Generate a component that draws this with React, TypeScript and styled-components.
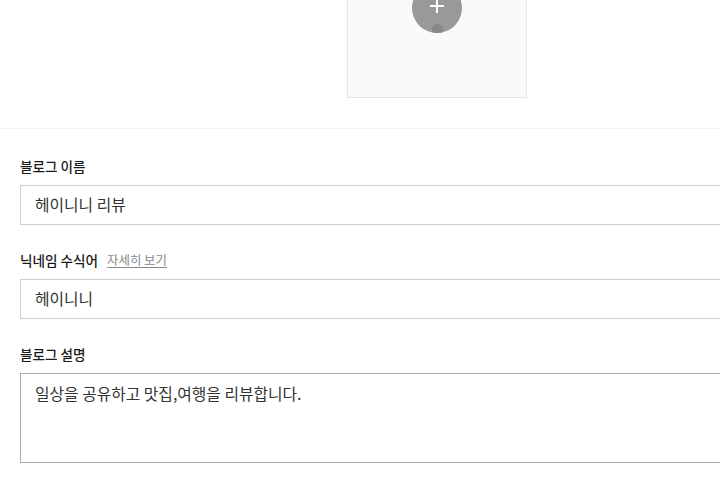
import React from "react";
import styled, { createGlobalStyle } from "styled-components";

const GlobalStyle = createGlobalStyle`
  html, body {
    margin: 0;
    padding: 0;
    background: #fff;
    overflow: hidden;
  }
  body {
    font-family: "Noto Sans CJK KR", "Noto Sans", sans-serif;
    color: #222;
  }
`;

const Page = styled.div`
  width: 874px;
  margin-top: -82px;
`;

const CoverSection = styled.section`
  display: flex;
  justify-content: center;
  padding-bottom: 30px;
  border-bottom: 1px solid #f0f0f0;
`;

const CoverBox = styled.div`
  width: 180px;
  height: 180px;
  box-sizing: border-box;
  background: #fafafa;
  border: 1px solid #e6e6e6;
  display: flex;
  align-items: center;
  justify-content: center;
`;

const AddButton = styled.button`
  position: relative;
  width: 50px;
  height: 50px;
  padding: 0;
  border: 0;
  border-radius: 50%;
  background: #999;
  display: flex;
  align-items: center;
  justify-content: center;
  overflow: hidden;
  cursor: pointer;
`;

const PlusIcon = styled.svg`
  width: 16px;
  height: 16px;
  margin-top: -4px;
`;

const Dot = styled.span`
  position: absolute;
  left: 50%;
  bottom: -2px;
  width: 11px;
  height: 11px;
  margin-left: -5.5px;
  border-radius: 50%;
  background: #878787;
`;

const Form = styled.form`
  padding: 27px 20px 0;
`;

const Field = styled.div`
  & + & {
    margin-top: 25px;
  }
`;

const LabelRow = styled.div`
  display: flex;
  align-items: center;
  height: 19px;
  margin-bottom: 10px;
`;

const Label = styled.label`
  font-size: 13.6px;
  font-weight: 500;
  color: #1a1a1a;
`;

const HelpLink = styled.a`
  margin-left: 9px;
  font-size: 12.4px;
  color: #888;
  text-decoration: underline;
  text-underline-offset: 2px;
`;

const TextInput = styled.input`
  display: block;
  width: 100%;
  height: 40px;
  box-sizing: border-box;
  padding: 0 14px 2px;
  border: 1px solid #c8ced6;
  border-radius: 0;
  font-family: "Noto Sans CJK KR", "Noto Sans", sans-serif;
  font-size: 15.8px;
  color: #333;
  outline: none;
`;

const TextArea = styled.textarea`
  display: block;
  width: 100%;
  height: 90px;
  box-sizing: border-box;
  padding: 9px 14px;
  border: 1px solid #a8aeb7;
  border-radius: 0;
  font-family: "Noto Sans CJK KR", "Noto Sans", sans-serif;
  font-size: 15.8px;
  line-height: 22px;
  color: #333;
  resize: none;
  outline: none;
`;

export default function App() {
  return (
    <>
      <GlobalStyle />
      <Page>
        <CoverSection>
          <CoverBox>
            <AddButton type="button" aria-label="이미지 추가">
              <PlusIcon viewBox="0 0 16 16">
                <path d="M8 1v14M1 8h14" stroke="#fff" strokeWidth="2" fill="none" />
              </PlusIcon>
              <Dot />
            </AddButton>
          </CoverBox>
        </CoverSection>
        <Form>
          <Field>
            <LabelRow>
              <Label>블로그 이름</Label>
            </LabelRow>
            <TextInput defaultValue="헤이니니 리뷰" />
          </Field>
          <Field>
            <LabelRow>
              <Label>닉네임 수식어</Label>
              <HelpLink href="#">자세히 보기</HelpLink>
            </LabelRow>
            <TextInput defaultValue="헤이니니" />
          </Field>
          <Field>
            <LabelRow>
              <Label>블로그 설명</Label>
            </LabelRow>
            <TextArea defaultValue="일상을 공유하고 맛집,여행을 리뷰합니다." />
          </Field>
        </Form>
      </Page>
    </>
  );
}
